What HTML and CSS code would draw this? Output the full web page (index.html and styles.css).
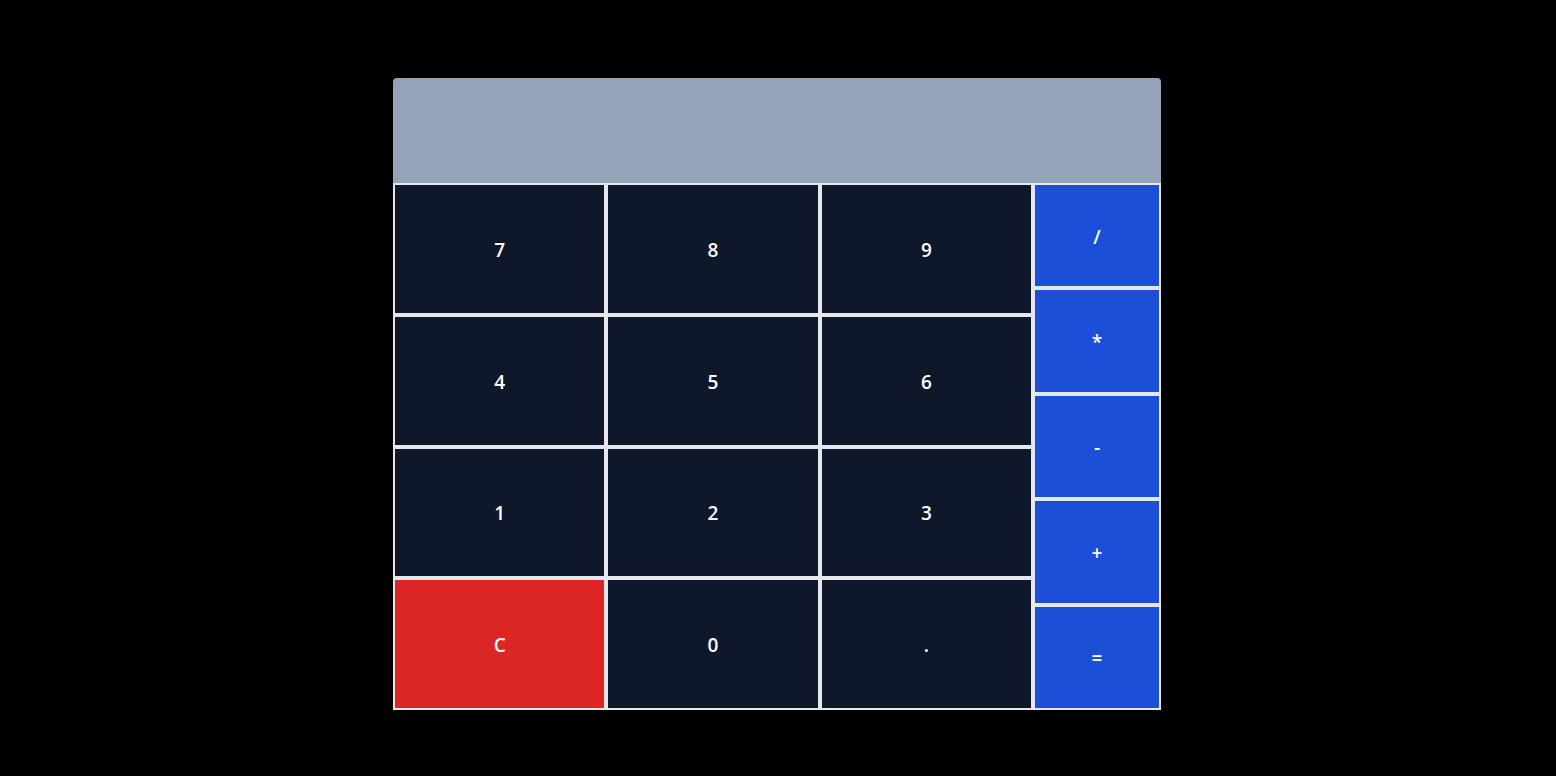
FILE: index.html
```html
<!DOCTYPE html>
<html lang="en">
<head>
    <meta charset="UTF-8">
    <meta name="viewport" content="width=device-width, initial-scale=1.0">
    <title>Calculator</title>
    <link rel="stylesheet" href="styles.css">
</head>
<body>
    <div class="calculator">
        <div class="display"></div>
        <div class="keys">
            <div class="numbers">
                <button class="key">7</button>
                <button class="key">8</button>
                <button class="key">9</button>
                <button class="key">4</button>
                <button class="key">5</button>
                <button class="key">6</button>
                <button class="key">1</button>
                <button class="key">2</button>
                <button class="key">3</button>
                <button class="key clear">C</button>
                <button class="key">0</button>
                <button class="key">.</button>
            </div>
            <div class="operators">
                <button class="key op">/</button>
                <button class="key op">*</button>
                <button class="key op">-</button>
                <button class="key op">+</button>
                <button class="key op">=</button>
            </div>
        </div>
    </div>
</body>
</html>
```

FILE: styles.css
```css
body {
    margin: 0;
    background-color: #000;
    font-family: "Open Sans", Arial, sans-serif;
}
.calculator {
    width: 768px;
    margin: 78px 0 0 calc((100% - 770px) / 2);
    border-radius: 4px 4px 0 0;
    overflow: hidden;
}
.display {
    height: 105px;
    background-color: #94a3b8;
}
.keys {
    display: flex;
    height: 527px;
}
.numbers {
    width: 640px;
    display: grid;
    grid-template-columns: repeat(3, 1fr);
    grid-template-rows: repeat(4, 1fr);
}
.operators {
    flex: 1;
    display: grid;
    grid-template-rows: repeat(5, 1fr);
}
.key {
    background-color: #0f172a;
    color: #fff;
    border: 2px solid #e5e7eb;
    font-family: inherit;
    font-size: 19px;
    font-weight: 600;
    cursor: pointer;
    padding: 2px 0 0;
}
.clear {
    background-color: #dc2626;
}
.op {
    background-color: #1d4ed8;
}
```
